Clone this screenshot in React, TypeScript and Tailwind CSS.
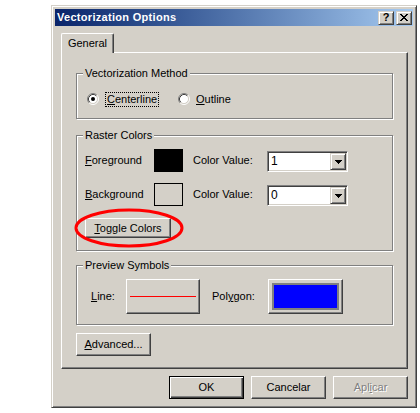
import React from 'react';

// Windows classic 3D edges
const raised =
  'border border-t-white border-l-white border-r-[#404040] border-b-[#404040] shadow-[inset_-1px_-1px_0_#808080]';
const raisedSmall =
  'border border-t-[#d4d0c8] border-l-[#d4d0c8] border-r-[#404040] border-b-[#404040] shadow-[inset_1px_1px_0_#fff,inset_-1px_-1px_0_#808080]';
const sunken =
  'border border-t-[#808080] border-l-[#808080] border-r-white border-b-white shadow-[inset_1px_1px_0_#404040,inset_-1px_-1px_0_#d4d0c8]';

const closeRows = ['11000011', '01100110', '00111100', '00011000', '00111100', '01100110', '11000011'];

const CloseGlyph = () => (
  <svg width="8" height="7" viewBox="0 0 8 7" shapeRendering="crispEdges">
    {closeRows.map((row, y) =>
      row.split('').map((c, x) => (c === '1' ? <rect key={`${x}-${y}`} x={x} y={y} width="1" height="1" fill="#000" /> : null))
    )}
  </svg>
);

const DownArrow = () => (
  <svg width="7" height="4" viewBox="0 0 7 4" shapeRendering="crispEdges">
    <path d="M0 0h7v1H0z M1 1h5v1H1z M2 2h3v1H2z M3 3h1v1H3z" fill="#000" />
  </svg>
);

const Radio = ({ checked }: { checked?: boolean }) => (
  <svg width="12" height="12" viewBox="0 0 12 12" className="flex-none">
    <circle cx="6" cy="6" r="4.5" fill="#fff" />
    <path d="M2.11 9.89 A5.5 5.5 0 0 1 9.89 2.11" stroke="#808080" fill="none" />
    <path d="M9.89 2.11 A5.5 5.5 0 0 1 2.11 9.89" stroke="#fff" fill="none" />
    <path d="M2.82 9.18 A4.5 4.5 0 0 1 9.18 2.82" stroke="#404040" fill="none" />
    <path d="M9.18 2.82 A4.5 4.5 0 0 1 2.82 9.18" stroke="#d4d0c8" fill="none" />
    {checked && <circle cx="6" cy="6" r="2" fill="#000" />}
  </svg>
);

const Group = ({ title, className, children }: { title: string; className: string; children: React.ReactNode }) => (
  <div className={`relative border border-[#808080] shadow-[inset_1px_1px_0_#fff,1px_1px_0_#fff] ${className}`}>
    <span className="absolute left-[6px] top-[-7px] bg-[#d4d0c8] px-[2px] leading-[13px]">{title}</span>
    {children}
  </div>
);

const Combo = ({ value }: { value: string }) => (
  <div className={`mt-[2px] flex h-[21px] w-[81px] bg-white p-[1px] ${sunken}`}>
    <span className="flex flex-1 items-center pl-[2px] text-[12px]">{value}</span>
    <div className={`flex w-[16px] items-center justify-center bg-[#d4d0c8] ${raisedSmall}`}>
      <DownArrow />
    </div>
  </div>
);

const ColorRow = ({ mnemonic, rest, swatch, value }: { mnemonic: string; rest: string; swatch: string; value: string }) => (
  <div className="flex h-[23px] items-start">
    <span className="w-[69px] self-center">
      <u>{mnemonic}</u>
      {rest}
    </span>
    <div className={`h-[23px] w-[29px] border border-black ${swatch}`} />
    <span className="ml-[10px] w-[74px] self-center">Color Value:</span>
    <Combo value={value} />
  </div>
);

export default function App() {
  return (
    <div className="min-h-screen bg-white pl-[51px] pt-[5px] font-['Liberation_Sans',Arial,sans-serif] text-[11px] leading-[13px] text-black">
      <div className="flex h-[403px] w-[366px] flex-col border border-t-[#d4d0c8] border-l-[#d4d0c8] border-r-[#404040] border-b-[#404040] bg-[#d4d0c8] p-[3px] shadow-[inset_1px_1px_0_#fff,inset_-1px_-1px_0_#808080]">
        {/* Title bar */}
        <div className="flex h-[17px] items-center bg-linear-to-r from-[#0a246a] to-[#a6caf0] pl-[2px] pr-[1px]">
          <span className="flex-1 font-bold tracking-[0.3px] text-white">Vectorization Options</span>
          <div className={`flex h-[14px] w-[16px] items-center justify-center bg-[#d4d0c8] text-[11px] font-bold leading-none ${raisedSmall}`}>
            ?
          </div>
          <div className={`ml-[2px] flex h-[14px] w-[16px] items-center justify-center bg-[#d4d0c8] ${raisedSmall}`}>
            <CloseGlyph />
          </div>
        </div>

        {/* Tab control */}
        <div className="ml-[6px] mt-[7px] w-[347px]">
          <div className="relative z-10 -mb-px flex h-[20px] w-[53px] items-center justify-center rounded-t-[2px] border-l border-r border-t border-l-white border-r-[#404040] border-t-white bg-[#d4d0c8] pb-[1px] shadow-[inset_-1px_0_0_#808080]">
            General
          </div>
          <div className="flex h-[317px] flex-col border border-t-white border-l-white border-r-[#404040] border-b-[#404040] px-[14px] pt-[20px] shadow-[inset_-1px_-1px_0_#808080]">
            {/* Vectorization Method */}
            <Group title="Vectorization Method" className="flex h-[46px] items-center pl-[10px] pt-[6px]">
              <div className="flex w-[91px] items-center">
                <Radio checked />
                <span className="ml-[6px] border border-dotted border-black px-[1px]">
                  <u>C</u>enterline
                </span>
              </div>
              <div className="flex items-center">
                <Radio />
                <span className="ml-[6px]">
                  <u>O</u>utline
                </span>
              </div>
            </Group>

            {/* Raster Colors */}
            <Group title="Raster Colors" className="mt-[16px] flex h-[116px] flex-col items-start pl-[8px] pt-[13px]">
              <ColorRow mnemonic="F" rest="oreground" swatch="bg-black" value="1" />
              <div className="mt-[11px]">
                <ColorRow mnemonic="B" rest="ackground" swatch="bg-[#d4d0c8]" value="0" />
              </div>
              <button className={`mt-[12px] flex h-[20px] w-[86px] items-center justify-center bg-[#d4d0c8] ${raised}`}>
                <span>
                  <u>T</u>oggle Colors
                </span>
              </button>
              <svg className="pointer-events-none absolute left-[-3px] top-[72px]" width="111" height="40" viewBox="0 0 111 40">
                <ellipse cx="55" cy="20" rx="53" ry="18" fill="none" stroke="#ff0000" strokeWidth="3" />
              </svg>
            </Group>

            {/* Preview Symbols */}
            <Group title="Preview Symbols" className="mt-[14px] flex h-[60px] items-start pl-[14px] pt-[13px]">
              <div className="flex h-[35px] items-center">
                <span className="w-[35px]">
                  <u>L</u>ine:
                </span>
                <button className={`flex h-[35px] w-[74px] items-center bg-[#d4d0c8] px-[3px] ${raised}`}>
                  <div className="h-px flex-1 bg-[#ff0000]" />
                </button>
                <span className="ml-[12px] w-[56px]">
                  Pol<u>y</u>gon:
                </span>
                <button className={`flex h-[35px] w-[75px] bg-[#d4d0c8] p-[3px] ${raised}`}>
                  <div className="flex-1 self-stretch border-2 border-[#808080] bg-[#0000ff]" />
                </button>
              </div>
            </Group>

            <button className={`mt-[8px] flex h-[23px] w-[75px] items-center justify-center bg-[#d4d0c8] ${raised}`}>
              <span>
                <u>A</u>dvanced...
              </span>
            </button>
          </div>
        </div>

        {/* Dialog buttons */}
        <div className="mt-[7px] flex justify-end gap-[7px] pr-[5px]">
          <button className="flex h-[23px] w-[75px] items-center justify-center border border-black bg-[#d4d0c8] shadow-[inset_1px_1px_0_#fff,inset_-1px_-1px_0_#404040,inset_-2px_-2px_0_#808080]">
            OK
          </button>
          <button className={`flex h-[23px] w-[75px] items-center justify-center bg-[#d4d0c8] ${raised}`}>Cancelar</button>
          <button className={`flex h-[23px] w-[75px] items-center justify-center bg-[#d4d0c8] text-[#808080] [text-shadow:1px_1px_0_#fff] ${raised}`}>
            <span>
              Apl<u>i</u>car
            </span>
          </button>
        </div>
      </div>
    </div>
  );
}
